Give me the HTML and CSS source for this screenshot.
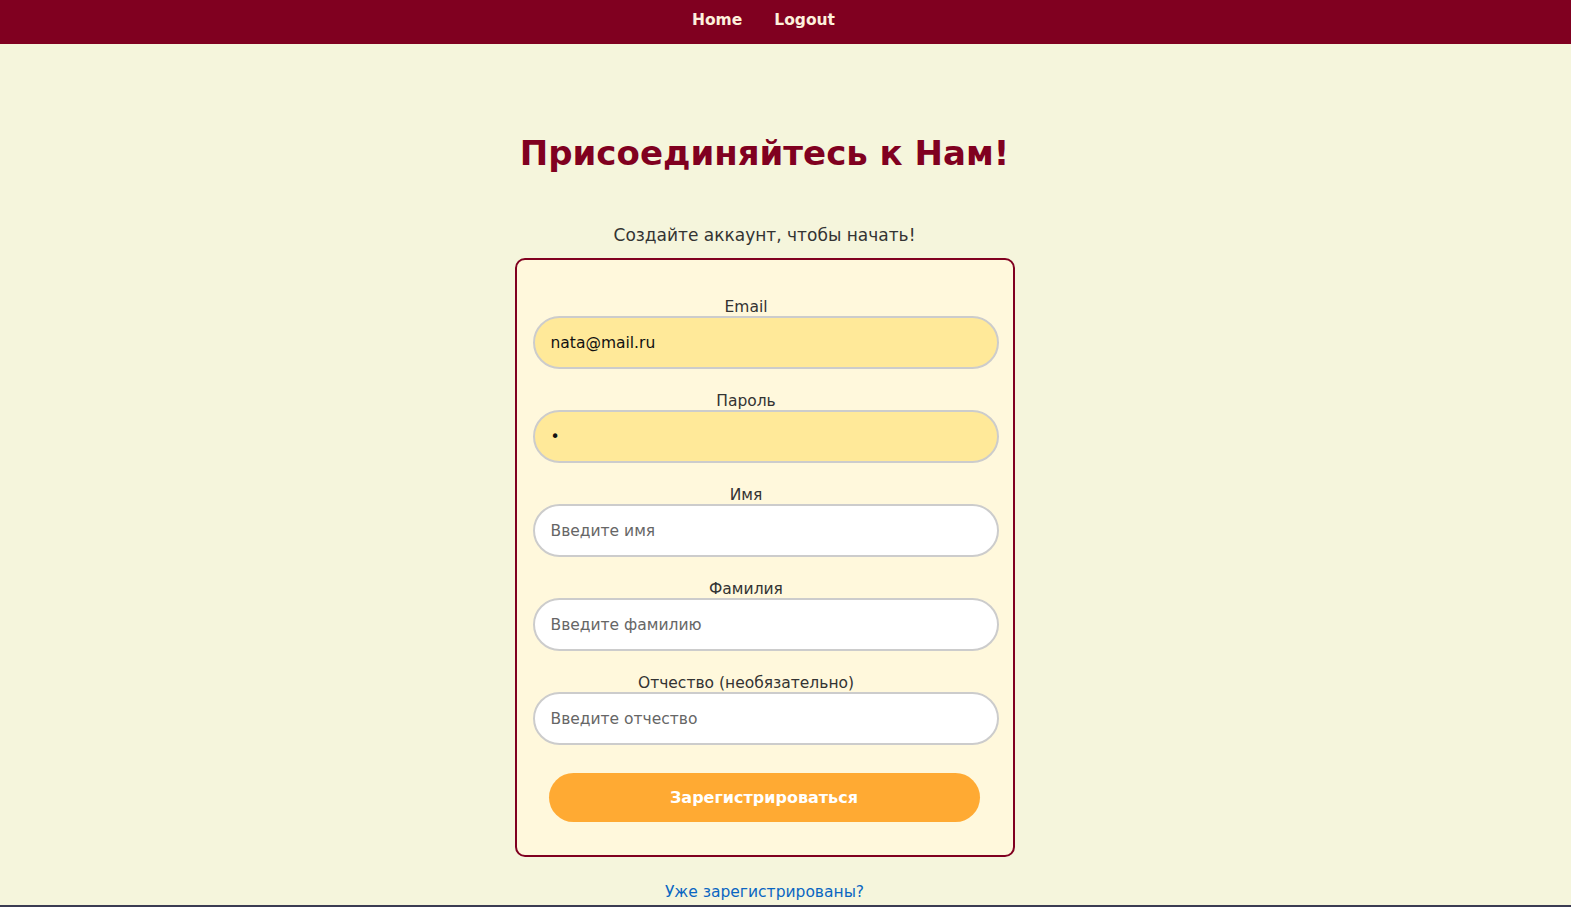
FILE: index.html
```html
<!DOCTYPE html>
<html lang="ru">
<head>
<meta charset="utf-8">
<title>Регистрация</title>
<link rel="stylesheet" href="styles.css">
</head>
<body>
<header class="topbar">
  <nav class="nav">
    <a href="#" class="nav-link">Home</a>
    <a href="#" class="nav-link">Logout</a>
  </nav>
</header>
<main class="main">
  <h1 class="title">Присоединяйтесь к Нам!</h1>
  <p class="subtitle">Создайте аккаунт, чтобы начать!</p>
  <form class="card">
    <div class="group">
      <label class="label">Email</label>
      <input class="field filled" type="email" value="nata@mail.ru">
    </div>
    <div class="group">
      <label class="label">Пароль</label>
      <input class="field filled" type="password" value="1">
    </div>
    <div class="group">
      <label class="label">Имя</label>
      <input class="field" type="text" placeholder="Введите имя">
    </div>
    <div class="group">
      <label class="label">Фамилия</label>
      <input class="field" type="text" placeholder="Введите фамилию">
    </div>
    <div class="group">
      <label class="label">Отчество (необязательно)</label>
      <input class="field" type="text" placeholder="Введите отчество">
    </div>
    <button class="submit" type="button">Зарегистрироваться</button>
  </form>
  <a href="#" class="login-link">Уже зарегистрированы?</a>
</main>
<footer class="footer"></footer>
</body>
</html>
```

FILE: styles.css
```css
* { box-sizing: border-box; }
html, body {
  margin: 0;
  padding: 0;
}
body {
  background: #f5f5dc;
  font-family: "Comic Sans MS", "DejaVu Sans", sans-serif;
  color: #333;
}
.topbar {
  background: #800020;
  height: 44px;
  display: flex;
  justify-content: center;
  align-items: center;
  padding-right: 44px;
}
.nav {
  display: flex;
  gap: 32px;
  padding-bottom: 4px;
}
.nav-link {
  color: #fdf0dc;
  text-decoration: none;
  font-weight: bold;
  font-size: 15.5px;
}
.main {
  display: flex;
  flex-direction: column;
  align-items: center;
  padding-top: 84px;
  padding-right: 42px;
}
.title {
  margin: 0;
  color: #800020;
  font-size: 34px;
  line-height: 50px;
  font-weight: bold;
}
.subtitle {
  margin: 45px 0 11px;
  font-size: 17px;
  line-height: 24px;
  color: #333;
}
.card {
  width: 500px;
  background: #fff8dc;
  border: 2px solid #800020;
  border-radius: 10px;
  padding: 31px 16px 33px 16px;
  display: flex;
  flex-direction: column;
}
.group {
  display: flex;
  flex-direction: column;
  margin-bottom: 16px;
}
.label {
  text-align: center;
  padding: 8px 37px 0 0;
  font-size: 15.5px;
  line-height: 17px;
  color: #333;
}
.field {
  width: 466px;
  height: 53px;
  border: 2px solid #ccc;
  border-radius: 27px;
  background: #fff;
  padding: 0 16px;
  font-family: inherit;
  font-size: 15.5px;
  color: #111;
  outline: none;
}
.field.filled {
  background: #ffe999;
}
.field::placeholder {
  color: #666;
}
.submit {
  margin: 12px 0 0 16px;
  width: 431px;
  height: 49px;
  border: none;
  border-radius: 25px;
  background: #ffaa33;
  color: #fff;
  font-family: inherit;
  font-weight: bold;
  font-size: 16px;
}
.login-link {
  margin-top: 23px;
  color: #0a66c2;
  text-decoration: none;
  font-size: 15.5px;
  line-height: 24px;
}
.footer {
  position: fixed;
  left: 0;
  right: 0;
  bottom: 0;
  height: 2px;
  background: #3a3b52;
}
```
